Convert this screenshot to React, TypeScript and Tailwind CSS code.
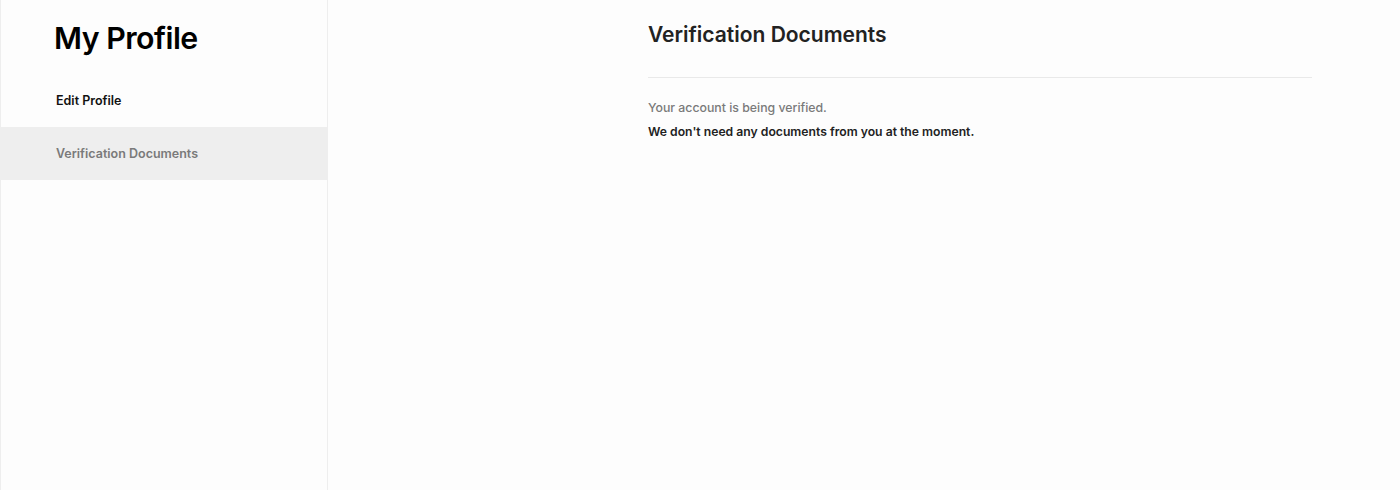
export default function App() {
  return (
    <div
      className="flex h-[490px] w-full bg-[#fdfdfd] text-[#1c1c1c]"
      style={{ fontFamily: "Inter, 'Noto Sans', sans-serif" }}
    >
      {/* Sidebar */}
      <aside className="flex w-[328px] shrink-0 flex-col border-l border-r border-[#eeeeee] bg-[#fdfdfd]">
        <div className="h-[74px] pl-[53px] pt-[18px]">
          <h1 className="text-[30.3px] font-semibold leading-[40px] tracking-[-0.5px] text-black">
            My Profile
          </h1>
        </div>
        <nav className="flex flex-col">
          <a className="flex h-[53px] items-center pl-[55px] pt-[2px] text-[12.5px] font-semibold text-[#111]">
            Edit Profile
          </a>
          <a className="flex h-[53px] items-center bg-[#eeeeee] pl-[55px] pt-[2px] text-[12.5px] font-semibold text-[#7a7a7a]">
            Verification Documents
          </a>
        </nav>
      </aside>

      {/* Main */}
      <main className="flex-1 pl-[320px] pr-[88px]">
        <h2 className="pt-[21px] text-[21px] font-semibold leading-[28px] text-[#222]">
          Verification Documents
        </h2>
        <div className="mt-[28px] border-t border-[#e9e9e9]" />
        <div className="mt-[22px] flex flex-col gap-[8px]">
          <p className="text-[12.3px] font-medium leading-[16px] text-[#7a7a7a]">
            Your account is being verified.
          </p>
          <p className="text-[12.2px] font-semibold leading-[16px] text-[#222]">
            We don't need any documents from you at the moment.
          </p>
        </div>
      </main>
    </div>
  );
}
